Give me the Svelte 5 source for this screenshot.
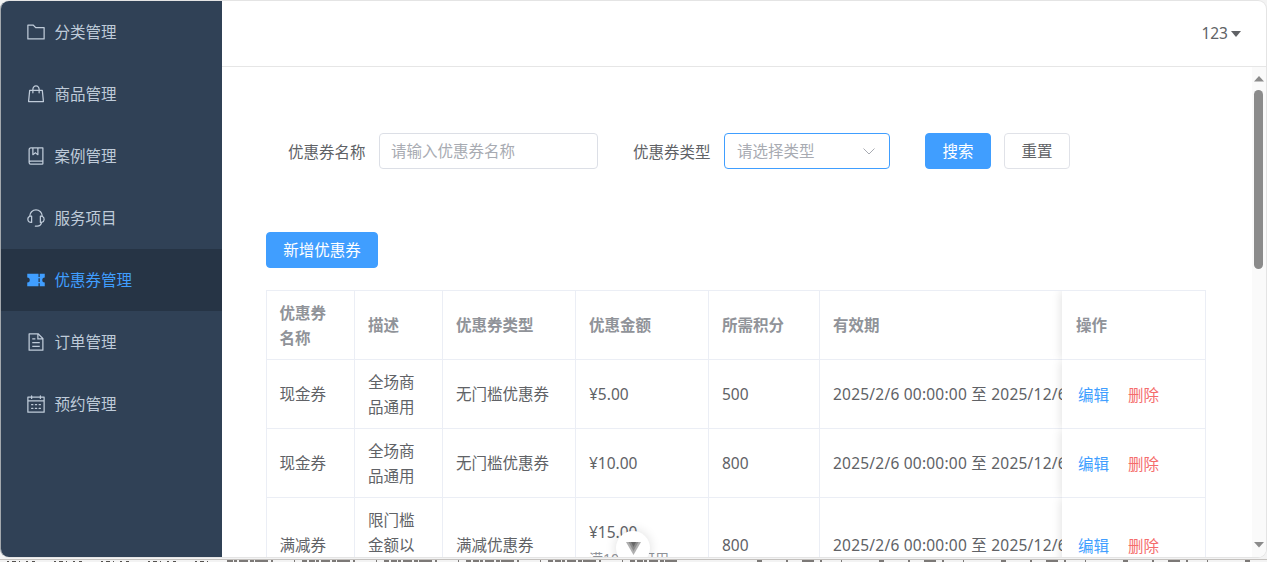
<script lang="ts">
  type MenuItem = { label: string; icon: string };

  type Coupon = {
    name: string;
    desc: string;
    type: string;
    amount: string;
    limit?: string;
    points: number;
    period: string;
  };

  const menu: MenuItem[] = [
    {
      label: '分类管理',
      icon: 'M128 192v640h768V320H485.76L357.504 192zm-32-64h287.872l128.384 128H928a32 32 0 0 1 32 32v576a32 32 0 0 1-32 32H96a32 32 0 0 1-32-32V160a32 32 0 0 1 32-32'
    },
    {
      label: '商品管理',
      icon: 'M320 288v-22.336C320 154.688 405.504 64 512 64s192 90.688 192 201.664v22.4h131.072a32 32 0 0 1 31.808 28.8l57.6 576a32 32 0 0 1-31.808 35.2H131.328a32 32 0 0 1-31.808-35.2l57.6-576a32 32 0 0 1 31.808-28.8H320zm64 0h256v-22.336C640 189.248 582.272 128 512 128c-70.272 0-128 61.248-128 137.664v22.4zm-64 64H217.92l-51.2 512h690.56l-51.264-512H704v96a32 32 0 1 1-64 0v-96H384v96a32 32 0 0 1-64 0z'
    },
    {
      label: '案例管理',
      icon: 'M192 736h640V128H256a64 64 0 0 0-64 64zm64-672h608a32 32 0 0 1 32 32v672a32 32 0 0 1-32 32H160l-32 57.536V192A128 128 0 0 1 256 64M240 800a48 48 0 1 0 0 96h592v-96zm0-64h656v160a64 64 0 0 1-64 64H240a112 112 0 0 1 0-224m144-608v250.88l96-76.8 96 76.8V128zm-64-64h320v381.44a32 32 0 0 1-51.968 24.96L480 384l-108.032 86.4A32 32 0 0 1 320 445.44z'
    },
    {
      label: '服务项目',
      icon: 'M864 409.6a192 192 0 0 1-37.888 349.44A256.064 256.064 0 0 1 576 960h-96a32 32 0 1 1 0-64h96a192.064 192.064 0 0 0 181.12-128H736a32 32 0 0 1-32-32V416a32 32 0 0 1 32-32h32c10.368 0 20.544.832 30.528 2.432a288 288 0 0 0-573.056 0A193.235 193.235 0 0 1 256 384h32a32 32 0 0 1 32 32v320a32 32 0 0 1-32 32h-32a192 192 0 0 1-96-358.4 352 352 0 0 1 704 0M256 448a128 128 0 1 0 0 256zm640 128a128 128 0 0 0-128-128v256a128 128 0 0 0 128-128'
    },
    {
      label: '优惠券管理',
      icon: 'M640 832H64V640a128 128 0 1 0 0-256V192h576v160h64V192h256v192a128 128 0 1 0 0 256v192H704V672h-64zm0-416v192h64V416z'
    },
    {
      label: '订单管理',
      icon: 'M832 384H576V128H192v768h640zm-26.496-64L640 154.496V320zM160 64h480l256 256v608a32 32 0 0 1-32 32H160a32 32 0 0 1-32-32V96a32 32 0 0 1 32-32m160 448h384v64H320zm0-192h160v64H320zm0 384h384v64H320z'
    },
    {
      label: '预约管理',
      icon: 'M128 384v512h768V192H768v32a32 32 0 1 1-64 0v-32H320v32a32 32 0 0 1-64 0v-32H128v128h768v64zm192-256h384V96a32 32 0 1 1 64 0v32h160a32 32 0 0 1 32 32v768a32 32 0 0 1-32 32H96a32 32 0 0 1-32-32V160a32 32 0 0 1 32-32h160V96a32 32 0 0 1 64 0zm-32 384h64a32 32 0 0 1 0 64h-64a32 32 0 0 1 0-64m0 192h64a32 32 0 1 1 0 64h-64a32 32 0 1 1 0-64m192-192h64a32 32 0 0 1 0 64h-64a32 32 0 0 1 0-64m0 192h64a32 32 0 1 1 0 64h-64a32 32 0 1 1 0-64m192-192h64a32 32 0 1 1 0 64h-64a32 32 0 1 1 0-64m0 192h64a32 32 0 1 1 0 64h-64a32 32 0 1 1 0-64'
    }
  ];

  const columns = ['优惠券名称', '描述', '优惠券类型', '优惠金额', '所需积分', '有效期', '操作'];

  const period = '2025/2/6 00:00:00 至 2025/12/6';

  const coupons: Coupon[] = [
    { name: '现金券', desc: '全场商品通用', type: '无门槛优惠券', amount: '¥5.00', points: 500, period },
    { name: '现金券', desc: '全场商品通用', type: '无门槛优惠券', amount: '¥10.00', points: 800, period },
    { name: '满减券', desc: '限门槛金额以上', type: '满减优惠券', amount: '¥15.00', limit: '满100元可用', points: 800, period }
  ];

  let active = $state('优惠券管理');
  let keyword = $state('');
</script>

<div class="page">
  <div class="window">
    <nav class="sidebar">
      {#each menu as item}
        <button class="menu-item" class:active={item.label === active} onclick={() => (active = item.label)}>
          <svg viewBox="0 0 1024 1024"><path fill="currentColor" d={item.icon} /></svg>
          <span>{item.label}</span>
        </button>
      {/each}
    </nav>

    <div class="main">
      <header>
        <span>123</span>
        <svg width="10" height="6" viewBox="0 0 10 6"><path fill="#606266" d="M0 0h10L5 6z" /></svg>
      </header>

      <div class="body">
        <div class="content">
          <div class="search">
            <label for="name">优惠券名称</label>
            <input id="name" placeholder="请输入优惠券名称" bind:value={keyword} />
            <span class="label">优惠券类型</span>
            <div class="select">
              <span>请选择类型</span>
              <svg width="12" height="7" viewBox="0 0 12 7">
                <path fill="none" stroke="#a8abb2" d="M.5.5 6 6 11.5.5" />
              </svg>
            </div>
            <button class="btn primary">搜索</button>
            <button class="btn">重置</button>
          </div>

          <button class="btn primary add">新增优惠券</button>

          <div class="table">
            <div class="row head">
              {#each columns as col, i}
                <div class="cell" class:fixed={i === 6}><div>{col}</div></div>
              {/each}
            </div>
            {#each coupons as c}
              <div class="row">
                <div class="cell"><div>{c.name}</div></div>
                <div class="cell"><div>{c.desc}</div></div>
                <div class="cell"><div>{c.type}</div></div>
                <div class="cell">
                  <div>
                    {c.amount}
                    {#if c.limit}<div class="limit">{c.limit}</div>{/if}
                  </div>
                </div>
                <div class="cell"><div>{c.points}</div></div>
                <div class="cell period"><div>{c.period}</div></div>
                <div class="cell fixed ops">
                  <a class="edit" href="#edit">编辑</a>
                  <a class="delete" href="#delete">删除</a>
                </div>
              </div>
            {/each}
          </div>
        </div>

        <div class="scrollbar">
          <svg width="10" height="6" viewBox="0 0 10 6"><path fill="#8b8b8b" d="M0 5.5h10L5 0z" /></svg>
          <div class="thumb"></div>
          <svg class="down" width="10" height="6" viewBox="0 0 10 6"><path fill="#8b8b8b" d="M0 0h10L5 5.5z" /></svg>
        </div>
      </div>
    </div>

    <div class="devtools">
      <svg width="15" height="13" viewBox="0 0 15 13">
        <path fill="#b0b0b0" d="M0 0h15L7.500 13z" />
        <path fill="#8a8a8a" d="M2.500 0h10l-5 9z" />
        <path fill="#666" d="M5 0h5L7.500 5z" />
      </svg>
    </div>
  </div>

  <!-- top edge of whatever lies below the window -->
  <svg class="behind" width="1267" height="4" viewBox="0 0 1267 4">
    <path stroke="#c4c1be" d="M0 1.500h1267" />
    <path stroke="#55524f" stroke-dasharray="2 3 4 3 1 6 2 4 3 19" d="M7 3.500h205" />
    <path stroke="#55524f" stroke-width="1.500" stroke-dasharray="6 1 3 2 9 2 4 1 13 3 2 21 1 7 5 2" d="M227 3h450" />
    <path stroke="#55524f" stroke-width="1.500" stroke-dasharray="5 24 2 14 12 6 2 19 1 37" d="M757 3h500" />
  </svg>
</div>

<style>
  :global(body) {
    background: #f3f3f3;
    overflow: hidden;
  }

  .page {
    width: 1267px;
    height: 562px;
    overflow: hidden;
    font-family: 'Noto Sans', 'Noto Sans CJK SC', sans-serif;
    font-size: 15.5px;
    color: #606266;
  }

  button,
  input {
    font: inherit;
    color: inherit;
    box-sizing: border-box;
  }

  .window {
    position: relative;
    box-sizing: border-box;
    height: 558px;
    display: flex;
    border: 1px solid #e4e4e4;
    border-left-color: #a3a8ad;
    border-radius: 9px;
    overflow: hidden;
    background: #fff;
  }

  .sidebar {
    width: 221px;
    flex: none;
    background: #304156;
  }

  .menu-item {
    display: flex;
    align-items: center;
    gap: 8.5px;
    width: 100%;
    height: 62px;
    padding: 0 25px 1px;
    border: 0;
    background: none;
    color: #bfcbd9;
  }

  .menu-item span {
    padding-bottom: 1px;
  }

  .menu-item svg {
    width: 20px;
    height: 20px;
  }

  .menu-item.active {
    background: #263445;
    color: #409eff;
  }

  .main {
    flex: 1;
    min-width: 0;
    display: flex;
    flex-direction: column;
  }

  header {
    height: 65px;
    flex: none;
    display: flex;
    align-items: center;
    justify-content: flex-end;
    gap: 3px;
    padding-right: 25px;
    border-bottom: 1px solid #e6e6e6;
  }

  header span {
    padding-bottom: 2px;
  }

  .body {
    flex: 1;
    min-height: 0;
    display: flex;
  }

  .content {
    flex: 1;
    min-width: 0;
    padding: 66px 46px 0 44px;
    overflow: hidden;
  }

  .search {
    display: flex;
    align-items: center;
    height: 36px;
    padding-left: 22px;
  }

  label,
  .label {
    width: 78px;
    margin-right: 13px;
    white-space: nowrap;
  }

  input {
    width: 219px;
    height: 36px;
    margin-right: 35px;
    padding: 0 11px;
    border: 1px solid #dcdfe6;
    border-radius: 4px;
    outline: none;
  }

  input::placeholder {
    color: #a8abb2;
  }

  .select {
    box-sizing: border-box;
    display: flex;
    align-items: center;
    justify-content: space-between;
    width: 166px;
    height: 36px;
    margin-right: 35px;
    padding: 0 14px 0 12px;
    border: 1px solid #409eff;
    border-radius: 4px;
    color: #a8abb2;
  }

  .select span {
    padding-bottom: 2px;
  }

  .btn {
    height: 36px;
    width: 66px;
    padding: 0 0 2px;
    border: 1px solid #e0e2e8;
    border-radius: 4px;
    background: #fff;
  }

  .btn + .btn {
    margin-left: 13px;
  }

  .primary {
    border-color: #409eff;
    background: #409eff;
    color: #fff;
  }

  .add {
    display: block;
    width: 112px;
    margin: 63px 0 22px;
  }

  .table {
    width: 938px;
    border: 1px solid #ebeef5;
  }

  .row {
    display: grid;
    grid-template-columns: 88px 88px 133px 133px 111px 242px 143px;
    min-height: 69px;
  }

  .cell {
    box-sizing: border-box;
    display: flex;
    align-items: center;
    min-width: 0;
    padding: 9.5px 13px 7.5px;
    border-right: 1px solid #ebeef5;
    border-bottom: 1px solid #ebeef5;
    line-height: 25.5px;
  }

  .row .cell:first-child {
    padding-left: 12.5px;
  }

  .row .cell:nth-child(6) {
    border-right: 0;
  }

  .head {
    font-weight: 700;
    color: #909399;
  }

  .period {
    overflow: hidden;
    white-space: nowrap;
    letter-spacing: 0.22px;
  }

  .head .fixed {
    padding-left: 14px;
  }

  .fixed {
    border-right: 0;
    background: #fff;
    box-shadow: 0 0 10px rgba(0, 0, 0, 0.14);
    clip-path: inset(0 0 0 -12px);
    z-index: 1;
  }

  .limit {
    font-size: 14px;
    color: #909399;
  }

  .row .ops {
    gap: 19px;
    padding: 11px 16px 7px;
  }

  .ops a {
    text-decoration: none;
  }

  .edit {
    color: #409eff;
  }

  .delete {
    color: #f56c6c;
  }

  .scrollbar {
    width: 14px;
    box-sizing: border-box;
    display: flex;
    flex-direction: column;
    align-items: center;
    padding: 9px 1px 9px 0;
    background: #fafafa;
  }

  .thumb {
    width: 9px;
    height: 179px;
    margin-top: 8px;
    border-radius: 5px;
    background: #8b8b8b;
  }

  .down {
    margin-top: auto;
  }

  /* floating toggle over the table */
  .devtools {
    position: absolute;
    left: 615px;
    top: 530px;
    width: 34px;
    height: 34px;
    display: flex;
    align-items: center;
    justify-content: center;
    border-radius: 50%;
    background: #fff;
    box-shadow: 0 0 12px rgba(0, 0, 0, 0.14);
    z-index: 2;
  }

  .behind {
    display: block;
  }
</style>
